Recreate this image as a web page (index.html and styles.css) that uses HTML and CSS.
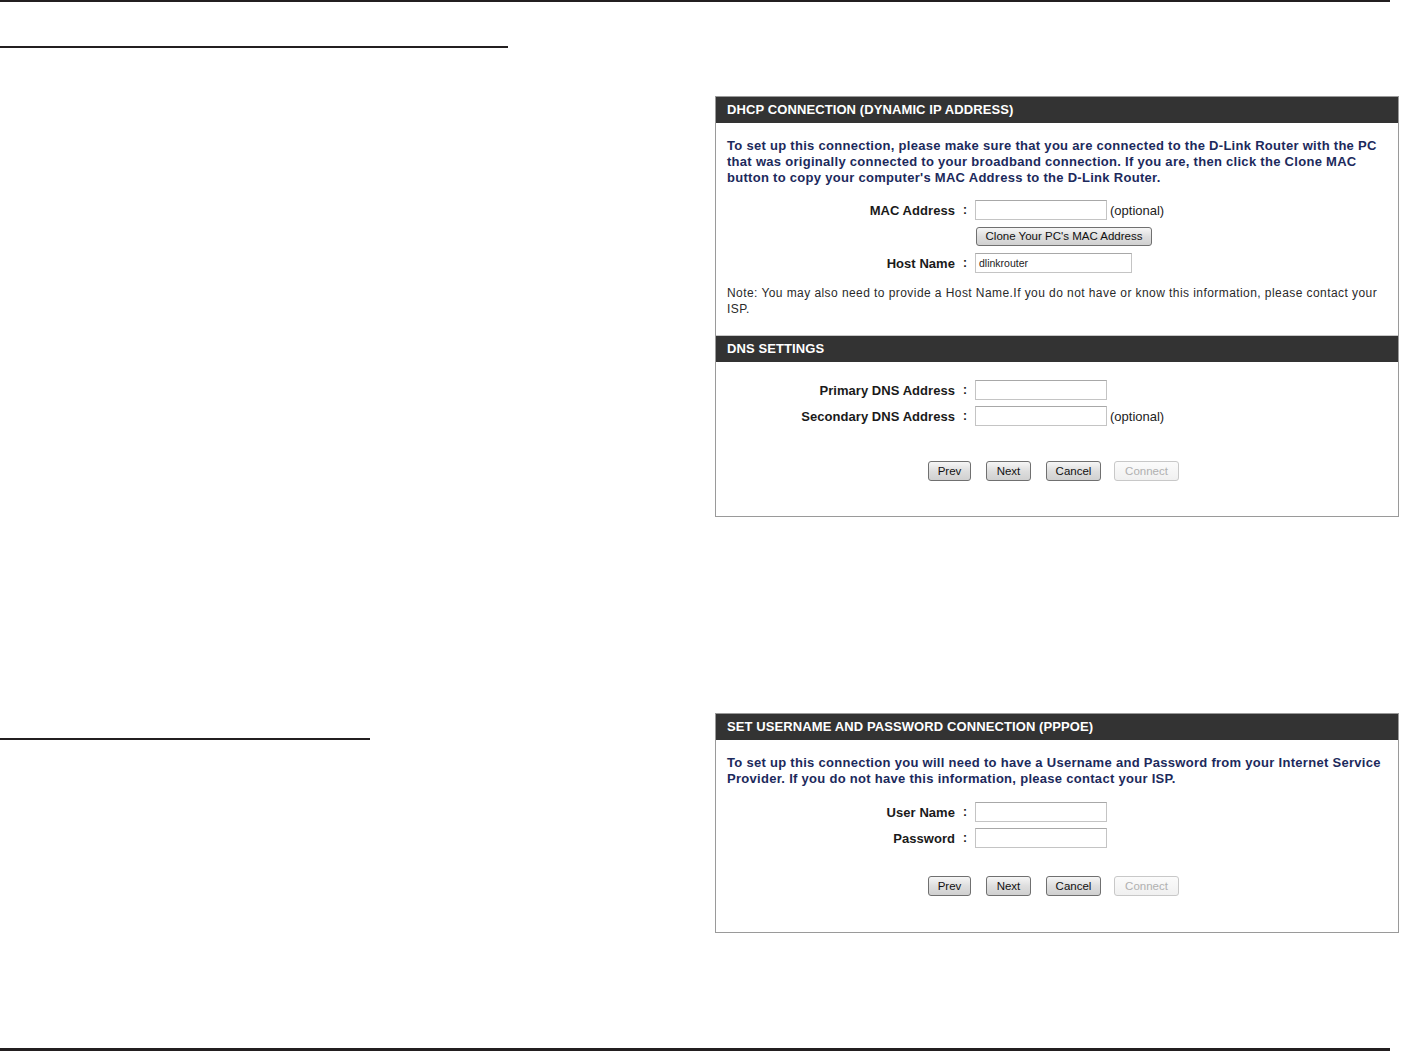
FILE: index.html
```html
<!DOCTYPE html>
<html>
<head>
<meta charset="utf-8">
<link rel="stylesheet" href="styles.css">
</head>
<body>
<div class="page">
  <div class="rule-top"></div>
  <div class="main">
    <div class="left">
      <div class="rule rule-a"></div>
      <div class="rule rule-b"></div>
    </div>
    <div class="right">
      <div class="panel panel-dhcp">
        <div class="section">
          <div class="hdr">DHCP CONNECTION (DYNAMIC IP ADDRESS)</div>
          <div class="body body-dhcp">
            <p class="intro">To set up this connection, please make sure that you are connected to the D-Link Router with the PC<br>that was originally connected to your broadband connection. If you are, then click the Clone MAC<br>button to copy your computer's MAC Address to the D-Link Router.</p>
            <div class="form">
              <div class="row">
                <span class="lbl">MAC Address</span><span class="colon">:</span>
                <span class="field"><span class="inp"></span><span class="opt">(optional)</span></span>
              </div>
              <div class="row row-btn">
                <span class="lbl"></span><span class="colon"></span>
                <span class="field"><span class="btn btn-clone">Clone Your PC's MAC Address</span></span>
              </div>
              <div class="row">
                <span class="lbl">Host Name</span><span class="colon">:</span>
                <span class="field"><span class="inp inp-wide">dlinkrouter</span></span>
              </div>
            </div>
            <p class="note">Note: You may also need to provide a Host Name.If you do not have or know this information, please contact your<br>ISP.</p>
          </div>
        </div>
        <div class="section">
          <div class="hdr">DNS SETTINGS</div>
          <div class="body body-dns">
            <div class="form">
              <div class="row">
                <span class="lbl">Primary DNS Address</span><span class="colon">:</span>
                <span class="field"><span class="inp"></span></span>
              </div>
              <div class="row">
                <span class="lbl">Secondary DNS Address</span><span class="colon">:</span>
                <span class="field"><span class="inp"></span><span class="opt">(optional)</span></span>
              </div>
            </div>
            <div class="btns">
              <span class="btn b-prev">Prev</span>
              <span class="btn b-next">Next</span>
              <span class="btn b-cancel">Cancel</span>
              <span class="btn b-connect disabled">Connect</span>
            </div>
          </div>
        </div>
      </div>
      <div class="panel panel-pppoe">
        <div class="section">
          <div class="hdr">SET USERNAME AND PASSWORD CONNECTION (PPPOE)</div>
          <div class="body body-pppoe">
            <p class="intro">To set up this connection you will need to have a Username and Password from your Internet Service<br>Provider. If you do not have this information, please contact your ISP.</p>
            <div class="form">
              <div class="row">
                <span class="lbl">User Name</span><span class="colon">:</span>
                <span class="field"><span class="inp"></span></span>
              </div>
              <div class="row">
                <span class="lbl">Password</span><span class="colon">:</span>
                <span class="field"><span class="inp"></span></span>
              </div>
            </div>
            <div class="btns btns-pppoe">
              <span class="btn b-prev">Prev</span>
              <span class="btn b-next">Next</span>
              <span class="btn b-cancel">Cancel</span>
              <span class="btn b-connect disabled">Connect</span>
            </div>
          </div>
        </div>
      </div>
    </div>
  </div>
  <div class="rule-bottom"></div>
</div>
</body>
</html>
```
FILE: styles.css
```css
html, body {
  margin: 0;
  padding: 0;
  background: #ffffff;
}
.page {
  width: 1401px;
  height: 1051px;
  display: flex;
  flex-direction: column;
  font-family: "Liberation Sans", Arial, sans-serif;
}
.rule-top {
  width: 1390px;
  height: 2px;
  background: #231f20;
  flex: none;
}
.rule-bottom {
  width: 1390px;
  height: 3px;
  background: #231f20;
  margin-top: auto;
  flex: none;
}
.main {
  display: grid;
  grid-template-columns: 715px 684px;
}
.left {
  display: flex;
  flex-direction: column;
}
.rule {
  height: 2px;
  background: #231f20;
}
.rule-a {
  width: 508px;
  margin-top: 44px;
}
.rule-b {
  width: 370px;
  margin-top: 690px;
}
.right {
  display: flex;
  flex-direction: column;
}
.panel {
  border: 1px solid #9a9a9a;
  box-sizing: border-box;
  width: 684px;
}
.panel-dhcp {
  margin-top: 94px;
  height: 421px;
}
.panel-pppoe {
  margin-top: 196px;
  height: 220px;
}
.section + .section {
  border-top: 1px solid #c8c8c8;
}
.hdr {
  background: #333333;
  color: #ffffff;
  font-weight: bold;
  font-size: 13px;
  height: 26px;
  line-height: 26px;
  padding-left: 11px;
  letter-spacing: 0.1px;
}
.body {
  padding: 0 11px;
}
.intro {
  margin: 0;
  padding-top: 15px;
  color: #1c2a5c;
  font-weight: bold;
  font-size: 13px;
  line-height: 16px;
  letter-spacing: 0.29px;
  white-space: nowrap;
}
.note {
  margin: 0;
  padding-top: 9px;
  padding-bottom: 18px;
  color: #2a2a2a;
  font-size: 12px;
  line-height: 16px;
  letter-spacing: 0.43px;
  white-space: nowrap;
}
.form {
  display: flex;
  flex-direction: column;
}
.row {
  display: flex;
  align-items: center;
  height: 26px;
}
.lbl {
  width: 228px;
  text-align: right;
  font-weight: bold;
  font-size: 13px;
  color: #1a1a1a;
  letter-spacing: 0.05px;
}
.colon {
  width: 20px;
  text-align: center;
  font-weight: bold;
  font-size: 12px;
  color: #1a1a1a;
}
.field {
  display: flex;
  align-items: center;
}
.inp {
  display: block;
  box-sizing: border-box;
  width: 132px;
  height: 20px;
  border: 1px solid #c4c4c4;
  border-top-color: #a8a8a8;
  background: #ffffff;
  font-size: 10.5px;
  line-height: 18px;
  padding-left: 3px;
  color: #222;
}
.inp-wide {
  width: 157px;
}
.opt {
  font-size: 13px;
  color: #222;
  margin-left: 3px;
}
.body-dhcp .form {
  margin-top: 11px;
}
.row-btn {
  height: 27px;
}
.btn {
  display: inline-block;
  box-sizing: border-box;
  height: 20px;
  line-height: 18px;
  border: 1px solid #707070;
  border-radius: 3px;
  background: linear-gradient(#f6f6f6, #dedede 50%, #d0d0d0);
  font-size: 11.5px;
  color: #111;
  text-align: center;
}
.btn-clone {
  width: 176px;
  margin-left: 1px;
  height: 19px;
  line-height: 17px;
}
.btns {
  display: flex;
  padding-left: 201px;
  margin-top: 32px;
}
.btns-pppoe {
  margin-top: 25px;
}
.b-prev { width: 43px; }
.b-next { width: 45px; margin-left: 15px; }
.b-cancel { width: 55px; margin-left: 15px; }
.b-connect { width: 65px; margin-left: 13px; }
.btn.disabled {
  border-color: #c8c8c8;
  color: #b0b0b0;
  background: linear-gradient(#fbfbfb, #f0f0f0);
}
.body-dns .form {
  margin-top: 15px;
}
.body-pppoe .form {
  margin-top: 12px;
}
```
